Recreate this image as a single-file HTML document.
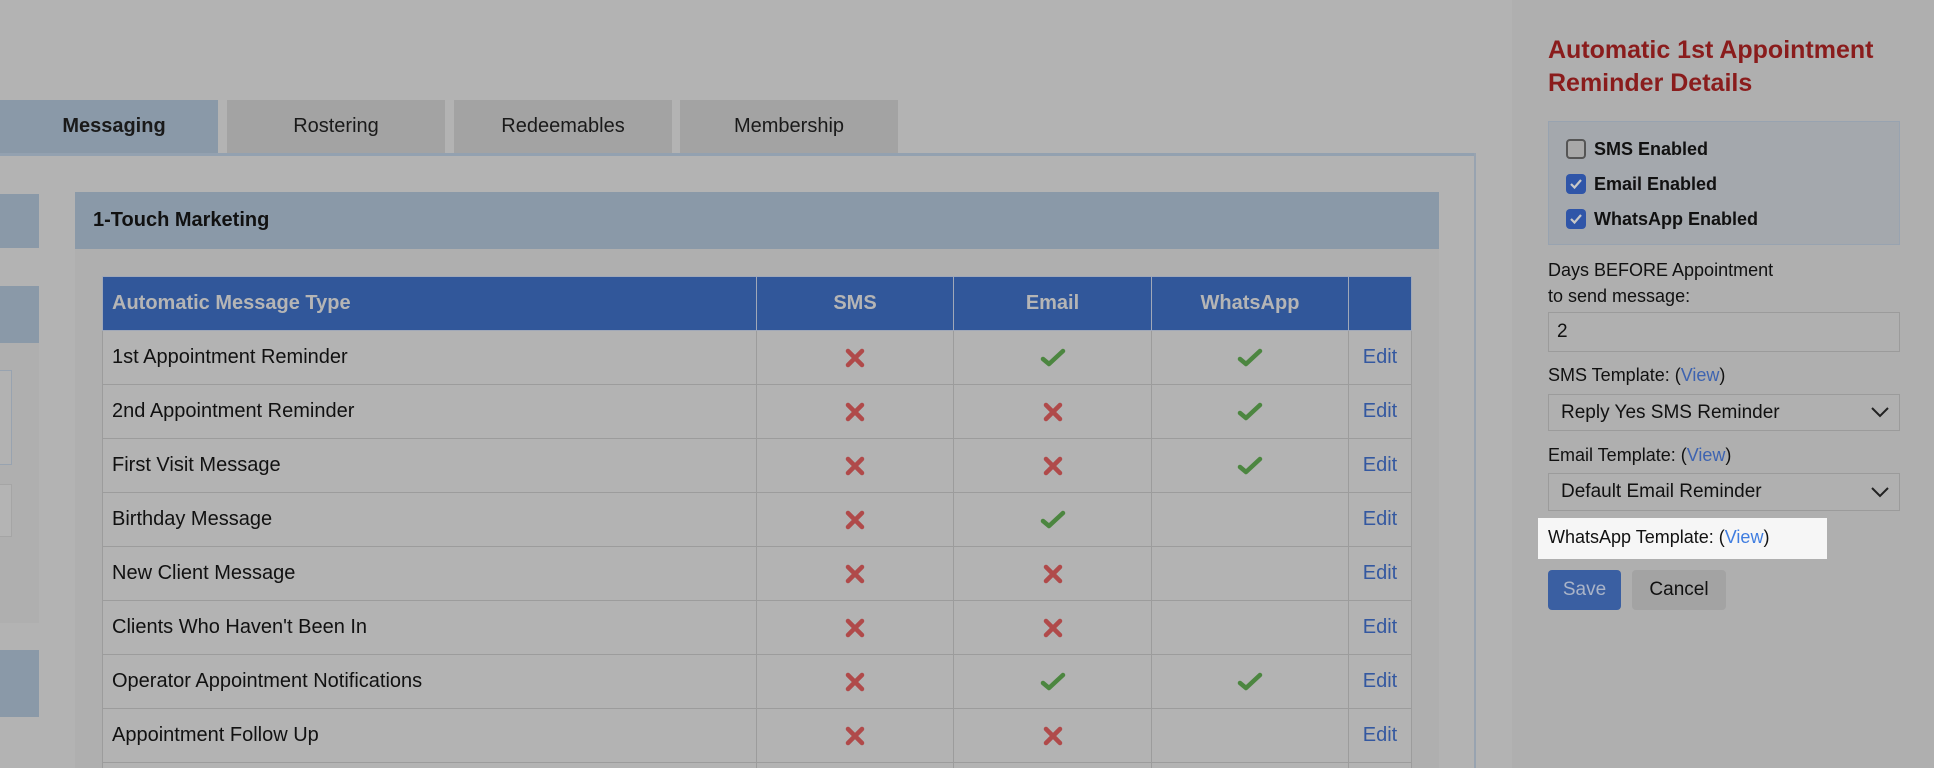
<!DOCTYPE html>
<html style="width:1934px;height:768px;overflow:hidden"><head><meta charset="utf-8"><style>
*{box-sizing:border-box;margin:0;padding:0}
body{width:1934px;height:768px;overflow:hidden;background:#b3b3b3;font-family:"Liberation Sans",sans-serif;position:relative;color:#111}
.a{position:absolute}
.tab{position:absolute;top:100px;height:53px;width:218px;background:#a3a3a3;font-size:20px;text-align:center;line-height:53px;color:#1a1a1a}
.tw{position:absolute;left:102px;top:276px;width:1312px;height:492px;overflow:hidden}
table{width:1310px;border-collapse:collapse;font-size:20px}
td,th{border:1px solid #9c9c9c;height:54px;padding:0 9px}
th{background:#31579a;color:#b5b5b5;font-weight:bold;text-align:center;border-color:#a0a8b8}
th:first-child{text-align:left}
td{background:#b3b3b3}
td.c{text-align:center}
td.c svg{vertical-align:middle}
td.e{color:#3458a0;text-align:center}
.lbl{position:absolute;left:1548px;font-size:18px;color:#111}
.v{color:#3d63b0}
.sel{position:absolute;left:1548px;width:352px;border:1px solid #9b9b9b;background:#b0b0b0;font-size:19px;padding-left:12px}
.ck{position:absolute;left:1566px;font-size:18px;font-weight:bold;display:flex;align-items:center;height:22px}
.cb{display:inline-block;width:20px;height:20px;border-radius:4px;margin-right:8px;flex:none;position:relative}
</style></head><body>
<div class="a" style="left:1512px;top:0;width:422px;height:768px;background:#afafaf"></div>
<div class="tab" style="left:0;background:#8a99a8;font-weight:bold;padding-left:10px">Messaging</div>
<div class="tab" style="left:227px">Rostering</div>
<div class="tab" style="left:454px">Redeemables</div>
<div class="tab" style="left:680px">Membership</div>
<div class="a" style="left:0;top:153px;width:1476px;height:3px;background:#93a1b0"></div>
<div class="a" style="left:1474px;top:153px;width:2px;height:615px;background:#98a3b0"></div>
<div class="a" style="left:0;top:194px;width:39px;height:54px;background:#8a99a8"></div>
<div class="a" style="left:0;top:286px;width:39px;height:57px;background:#8a99a8"></div>
<div class="a" style="left:0;top:343px;width:39px;height:280px;background:#afafaf"></div>
<div class="a" style="left:-2px;top:370px;width:14px;height:95px;border:1px solid #98a3b0;background:#b2b2b2"></div>
<div class="a" style="left:-2px;top:484px;width:14px;height:53px;border:1px solid #a5a5a5;background:#b4b4b4"></div>
<div class="a" style="left:0;top:650px;width:39px;height:67px;background:#8a99a8"></div>
<div class="a" style="left:75px;top:192px;width:1364px;height:57px;background:#8a99a8;font-weight:bold;font-size:20px;line-height:57px;padding-left:18px">1-Touch Marketing</div>
<div class="a" style="left:75px;top:249px;width:1364px;height:519px;background:#afafaf"></div>
<svg width="0" height="0" style="position:absolute"><defs>
<g id="x"><path d="M4 4 L18 18 M18 4 L4 18" stroke="#b04a4a" stroke-width="4.5" stroke-linecap="round"/></g>
<g id="k"><path d="M4 12 L10 17 L24 4" stroke="#4c8640" stroke-width="4.5" fill="none" stroke-linecap="round" stroke-linejoin="round"/></g>
</defs></svg>
<div class="tw"><table>
<tr><th style="width:654px">Automatic Message Type</th><th style="width:197px">SMS</th><th style="width:198px">Email</th><th style="width:197px">WhatsApp</th><th></th></tr>
<tr><td>1st Appointment Reminder</td><td class="c"><svg width="22" height="22"><use href="#x"/></svg></td><td class="c"><svg width="28" height="21"><use href="#k"/></svg></td><td class="c"><svg width="28" height="21"><use href="#k"/></svg></td><td class="e">Edit</td></tr>
<tr><td>2nd Appointment Reminder</td><td class="c"><svg width="22" height="22"><use href="#x"/></svg></td><td class="c"><svg width="22" height="22"><use href="#x"/></svg></td><td class="c"><svg width="28" height="21"><use href="#k"/></svg></td><td class="e">Edit</td></tr>
<tr><td>First Visit Message</td><td class="c"><svg width="22" height="22"><use href="#x"/></svg></td><td class="c"><svg width="22" height="22"><use href="#x"/></svg></td><td class="c"><svg width="28" height="21"><use href="#k"/></svg></td><td class="e">Edit</td></tr>
<tr><td>Birthday Message</td><td class="c"><svg width="22" height="22"><use href="#x"/></svg></td><td class="c"><svg width="28" height="21"><use href="#k"/></svg></td><td></td><td class="e">Edit</td></tr>
<tr><td>New Client Message</td><td class="c"><svg width="22" height="22"><use href="#x"/></svg></td><td class="c"><svg width="22" height="22"><use href="#x"/></svg></td><td></td><td class="e">Edit</td></tr>
<tr><td>Clients Who Haven't Been In</td><td class="c"><svg width="22" height="22"><use href="#x"/></svg></td><td class="c"><svg width="22" height="22"><use href="#x"/></svg></td><td></td><td class="e">Edit</td></tr>
<tr><td>Operator Appointment Notifications</td><td class="c"><svg width="22" height="22"><use href="#x"/></svg></td><td class="c"><svg width="28" height="21"><use href="#k"/></svg></td><td class="c"><svg width="28" height="21"><use href="#k"/></svg></td><td class="e">Edit</td></tr>
<tr><td>Appointment Follow Up</td><td class="c"><svg width="22" height="22"><use href="#x"/></svg></td><td class="c"><svg width="22" height="22"><use href="#x"/></svg></td><td></td><td class="e">Edit</td></tr>
<tr><td>&nbsp;</td><td></td><td></td><td></td><td></td></tr>
</table></div>
<div class="a" style="left:1548px;top:34px;font-size:25px;font-weight:bold;color:#8a1c1c;line-height:33px">Automatic 1st Appointment<br>Reminder Details</div>
<div class="a" style="left:1548px;top:121px;width:352px;height:124px;border:1px solid #98a3b0;background:#a4a8ad"></div>
<div class="ck" style="top:138px"><span class="cb" style="border:2px solid #555;background:#a8a8a8"></span>SMS Enabled</div>
<div class="ck" style="top:173px"><span class="cb" style="background:#2f55a8"><svg class="a" style="left:3px;top:4px" width="14" height="12"><path d="M2 6 L5.5 9.5 L12 2" stroke="#c8c8c8" stroke-width="2.2" fill="none"/></svg></span>Email Enabled</div>
<div class="ck" style="top:208px"><span class="cb" style="background:#2f55a8"><svg class="a" style="left:3px;top:4px" width="14" height="12"><path d="M2 6 L5.5 9.5 L12 2" stroke="#c8c8c8" stroke-width="2.2" fill="none"/></svg></span>WhatsApp Enabled</div>
<div class="lbl" style="top:257px;line-height:26px">Days BEFORE Appointment<br>to send message:</div>
<div class="sel" style="top:312px;height:40px;line-height:38px;padding-left:8px">2</div>
<div class="lbl" style="top:365px">SMS Template: (<span class="v">View</span>)</div>
<div class="sel" style="top:394px;height:37px;line-height:35px">Reply Yes SMS Reminder<svg class="a" style="right:10px;top:12px" width="18" height="11"><path d="M1 1 L9 9 L17 1" stroke="#222" stroke-width="2" fill="none"/></svg></div>
<div class="lbl" style="top:445px">Email Template: (<span class="v">View</span>)</div>
<div class="sel" style="top:473px;height:38px;line-height:36px">Default Email Reminder<svg class="a" style="right:10px;top:13px" width="18" height="11"><path d="M1 1 L9 9 L17 1" stroke="#222" stroke-width="2" fill="none"/></svg></div>
<div class="a" style="left:1538px;top:518px;width:289px;height:41px;background:#f6f6f6"></div>
<div class="lbl" style="top:527px">WhatsApp Template: (<span style="color:#3f7de0">View</span>)</div>
<div class="a" style="left:1548px;top:570px;width:73px;height:40px;background:#3a5fa2;border-radius:4px;color:#aab4c8;font-size:19px;text-align:center;line-height:40px">Save</div>
<div class="a" style="left:1632px;top:570px;width:94px;height:40px;background:#a3a3a3;border-radius:4px;color:#111;font-size:19px;text-align:center;line-height:40px">Cancel</div>
</body></html>
